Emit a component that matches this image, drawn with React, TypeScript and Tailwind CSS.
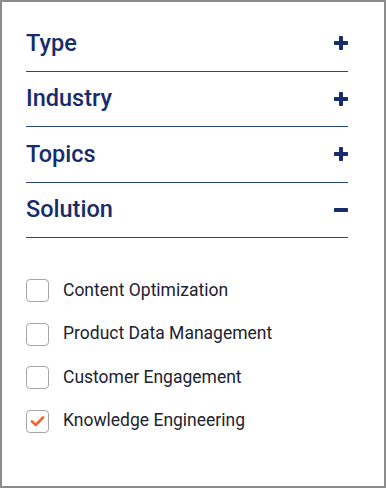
import { useState } from "react";

const sections = [
  { title: "Type", open: false },
  { title: "Industry", open: false },
  { title: "Topics", open: false },
  { title: "Solution", open: true },
];

const solutions = [
  { label: "Content Optimization", checked: false },
  { label: "Product Data Management", checked: false },
  { label: "Customer Engagement", checked: false },
  { label: "Knowledge Engineering", checked: true },
];

const Toggle = ({ open }: { open: boolean }) => (
  <svg width="14" height="14" viewBox="0 0 14 14" className="shrink-0">
    <rect x="0" y="5" width="14" height="4" rx="0.8" fill="#172d6b" />
    {!open && <rect x="5" y="0" width="4" height="14" rx="0.8" fill="#172d6b" />}
  </svg>
);

const App = () => {
  const [checked, setChecked] = useState(solutions.map((s) => s.checked));

  return (
    <div
      className="w-[386px] h-[488px] bg-white border-2 border-[#8c8c8c] px-[24px] pt-[14px]"
      style={{ fontFamily: "Roboto, 'Liberation Sans', sans-serif" }}
    >
      <div className="flex flex-col w-[322px]">
        {sections.map((s) => (
          <div
            key={s.title}
            className="flex items-center justify-between h-[55.5px] border-b border-[#2a4785]"
          >
            <span className="text-[23.5px] font-medium text-[#172d6b] leading-none">
              {s.title}
            </span>
            <Toggle open={s.open} />
          </div>
        ))}
        <div className="flex flex-col gap-[20.5px] pt-[41px]">
          {solutions.map((s, i) => (
            <label key={s.label} className="flex items-center gap-[14px] cursor-pointer">
              <span
                className="w-[23px] h-[23px] rounded-[4px] border border-[#a6a6a6] bg-white flex items-center justify-center"
                onClick={() =>
                  setChecked((c) => c.map((v, j) => (j === i ? !v : v)))
                }
              >
                {checked[i] && (
                  <svg width="15" height="12" viewBox="0 0 15 12">
                    <path
                      d="M2 6.5 L5.8 10 L13 2.5"
                      fill="none"
                      stroke="#f26430"
                      strokeWidth="2.6"
                      strokeLinecap="round"
                      strokeLinejoin="round"
                    />
                  </svg>
                )}
              </span>
              <span className="text-[17.5px] text-[#1d2230] leading-none">{s.label}</span>
            </label>
          ))}
        </div>
      </div>
    </div>
  );
};

export default App;
